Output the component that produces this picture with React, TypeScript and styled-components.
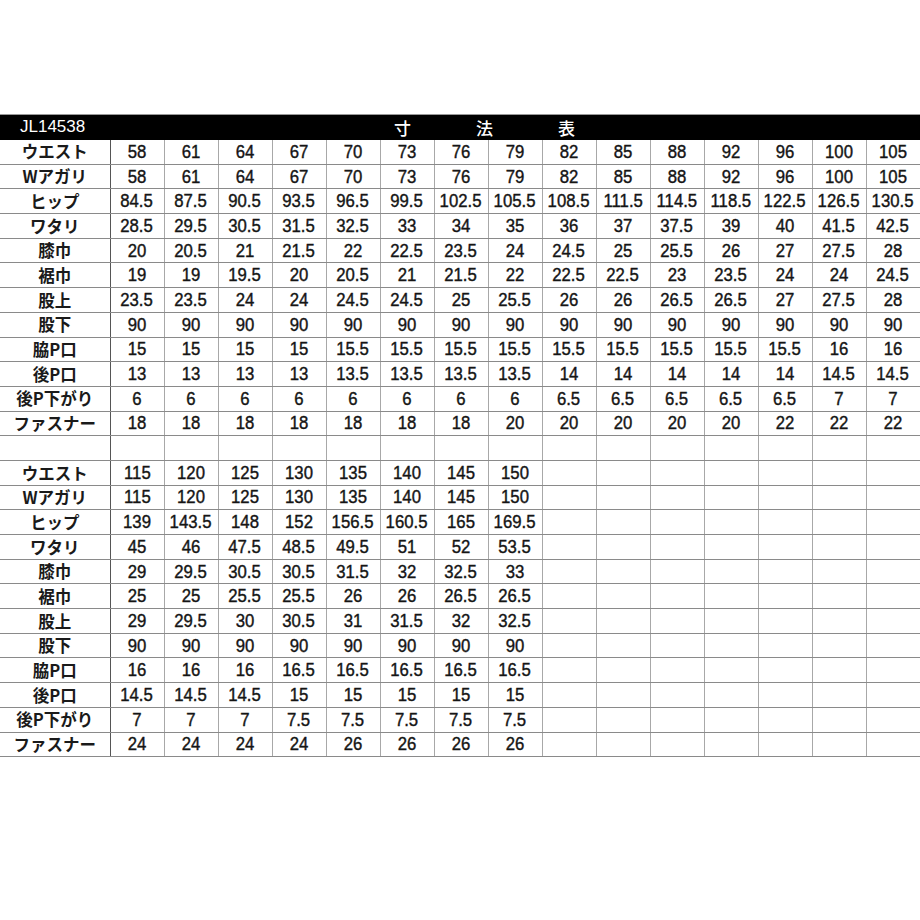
import React from "react"
import styled, { createGlobalStyle } from "styled-components"

const GlobalStyle = createGlobalStyle`
  html, body {
    margin: 0;
    padding: 0;
    background: #fff;
  }
`

const Page = styled.div`
  width: 920px;
  height: 920px;
  padding-top: 114px;
  box-sizing: border-box;
  background: #fff;
`

const Table = styled.table`
  width: 920px;
  border-collapse: collapse;
  table-layout: fixed;
  font-family: "Liberation Sans", Arial, "Noto Sans CJK JP", sans-serif;
  color: #111;
`

const HeaderRow = styled.tr`
  height: 25px;
  background: #000;
`

const HeaderCell = styled.th`
  padding: 0;
  border-top: 1px solid #999;
  text-align: left;
  font-weight: 400;
`

const HeaderInner = styled.div`
  display: flex;
  align-items: center;
  height: 24px;
  color: #fff;
`

const Code = styled.span`
  padding-left: 20px;
  width: 90px;
  font-size: 17px;
  font-family: "Liberation Sans", Arial, sans-serif;
`

const Title = styled.span`
  margin-left: 284px;
  font-size: 17px;
  letter-spacing: 65px;
  font-family: "Noto Sans CJK JP", sans-serif;
  font-weight: 500;
`

const Row = styled.tr`
  height: 24.7px;
`

const Label = styled.td`
  padding: 0;
  text-align: center;
  font-family: "Noto Sans CJK JP", sans-serif;
  font-weight: 700;
  font-size: 16.5px;
  line-height: 1;
  color: #1a1a1a;
  border-bottom: 1px solid #8a8a8a;
  border-right: 1px solid #555;
  white-space: nowrap;
  overflow: hidden;
`

const Cell = styled.td`
  padding: 0;
  text-align: center;
  font-size: 18px;
  line-height: 1;
  border-bottom: 1px solid #8a8a8a;
  border-right: 1px solid #a8a8a8;
  white-space: nowrap;
`

const Value = styled.span`
  display: inline-block;
  transform: scale(0.93, 1.02);
  font-weight: 400;
  color: #151515;
  -webkit-text-stroke: 0.4px #151515;
`

const LabelCol = styled.col`
  width: 110px;
`

const DataCol = styled.col`
  width: 54px;
`

type Line = [string, (string | number)[]]

const upper: Line[] = [
  ["ウエスト", [58, 61, 64, 67, 70, 73, 76, 79, 82, 85, 88, 92, 96, 100, 105]],
  ["Wアガリ", [58, 61, 64, 67, 70, 73, 76, 79, 82, 85, 88, 92, 96, 100, 105]],
  ["ヒップ", [84.5, 87.5, 90.5, 93.5, 96.5, 99.5, 102.5, 105.5, 108.5, 111.5, 114.5, 118.5, 122.5, 126.5, 130.5]],
  ["ワタリ", [28.5, 29.5, 30.5, 31.5, 32.5, 33, 34, 35, 36, 37, 37.5, 39, 40, 41.5, 42.5]],
  ["膝巾", [20, 20.5, 21, 21.5, 22, 22.5, 23.5, 24, 24.5, 25, 25.5, 26, 27, 27.5, 28]],
  ["裾巾", [19, 19, 19.5, 20, 20.5, 21, 21.5, 22, 22.5, 22.5, 23, 23.5, 24, 24, 24.5]],
  ["股上", [23.5, 23.5, 24, 24, 24.5, 24.5, 25, 25.5, 26, 26, 26.5, 26.5, 27, 27.5, 28]],
  ["股下", Array(15).fill(90)],
  ["脇P口", [15, 15, 15, 15, 15.5, 15.5, 15.5, 15.5, 15.5, 15.5, 15.5, 15.5, 15.5, 16, 16]],
  ["後P口", [13, 13, 13, 13, 13.5, 13.5, 13.5, 13.5, 14, 14, 14, 14, 14, 14.5, 14.5]],
  ["後P下がり", [6, 6, 6, 6, 6, 6, 6, 6, 6.5, 6.5, 6.5, 6.5, 6.5, 7, 7]],
  ["ファスナー", [18, 18, 18, 18, 18, 18, 18, 20, 20, 20, 20, 20, 22, 22, 22]],
]

const lower: Line[] = [
  ["ウエスト", [115, 120, 125, 130, 135, 140, 145, 150]],
  ["Wアガリ", [115, 120, 125, 130, 135, 140, 145, 150]],
  ["ヒップ", [139, 143.5, 148, 152, 156.5, 160.5, 165, 169.5]],
  ["ワタリ", [45, 46, 47.5, 48.5, 49.5, 51, 52, 53.5]],
  ["膝巾", [29, 29.5, 30.5, 30.5, 31.5, 32, 32.5, 33]],
  ["裾巾", [25, 25, 25.5, 25.5, 26, 26, 26.5, 26.5]],
  ["股上", [29, 29.5, 30, 30.5, 31, 31.5, 32, 32.5]],
  ["股下", Array(8).fill(90)],
  ["脇P口", [16, 16, 16, 16.5, 16.5, 16.5, 16.5, 16.5]],
  ["後P口", [14.5, 14.5, 14.5, 15, 15, 15, 15, 15]],
  ["後P下がり", [7, 7, 7, 7.5, 7.5, 7.5, 7.5, 7.5]],
  ["ファスナー", [24, 24, 24, 24, 26, 26, 26, 26]],
]

const COLS = 15

const DataRow: React.FC<{ line: Line }> = ({ line }) => {
  const [label, values] = line
  const cells = Array.from({ length: COLS }, (_, i) => values[i] ?? "")
  return (
    <Row>
      <Label>{label}</Label>
      {cells.map((v, i) => (
        <Cell key={i}>{v !== "" && <Value>{v}</Value>}</Cell>
      ))}
    </Row>
  )
}

const App: React.FC = () => {
  return (
    <Page>
      <GlobalStyle />
      <Table>
        <colgroup>
          <LabelCol />
          {Array.from({ length: COLS }, (_, i) => (
            <DataCol key={i} />
          ))}
        </colgroup>
        <thead>
          <HeaderRow>
            <HeaderCell colSpan={COLS + 1}>
              <HeaderInner>
                <Code>JL14538</Code>
                <Title>寸法表</Title>
              </HeaderInner>
            </HeaderCell>
          </HeaderRow>
        </thead>
        <tbody>
          {upper.map((line, i) => (
            <DataRow key={"u" + i} line={line} />
          ))}
          <DataRow line={["", []]} />
          {lower.map((line, i) => (
            <DataRow key={"l" + i} line={line} />
          ))}
        </tbody>
      </Table>
    </Page>
  )
}

export default App
